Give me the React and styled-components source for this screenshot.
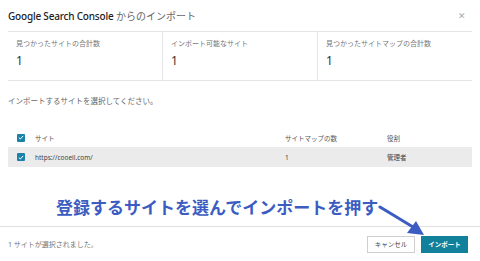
import React from 'react';
import styled, {createGlobalStyle} from "styled-components";

const GlobalStyle = createGlobalStyle`
  html, body {
    margin: 0;
    padding: 0;
    background: #ffffff;
  }
  body {
    font-family: "Noto Sans", "Noto Sans CJK JP", sans-serif;
    color: #333333;
  }
`

const Dialog = styled.div`
  width: 480px;
  height: 261px;
  display: flex;
  flex-direction: column;
  position: relative;
  overflow: hidden;
`
const Content = styled.div`
  padding: 0 8px;
  flex: 1;
  display: flex;
  flex-direction: column;
`
const Header = styled.div`
  height: 32px;
  display: flex;
  align-items: center;
  justify-content: space-between;
  border-bottom: 1px solid #e6e6e6;
  box-sizing: border-box;
`
const Title = styled.h1`
  margin: 0;
  font-size: 10px;
  font-weight: 400;
  color: #666666;
`
const Latin = styled.span`
  font-size: 10px;
  font-weight: 500;
  letter-spacing: -0.2px;
  color: #222222;
`
const Close = styled.span`
  font-size: 9px;
  color: #aaaaaa;
  margin-right: 6px;
`
const Stats = styled.div`
  display: grid;
  grid-template-columns: 154px 155px 1fr;
  height: 48px;
  border-bottom: 1px solid #e6e6e6;
`
const Stat = styled.div`
  padding: 7px 8px 0;
  border-left: ${p => p.first ? 'none' : '1px solid #e6e6e6'};
  display: flex;
  flex-direction: column;
  gap: 4px;
`
const StatLabel = styled.div`
  font-size: 7px;
  color: #777777;
  line-height: 10px;
`
const StatValue = styled.div`
  font-size: 12px;
  color: #333333;
  line-height: 16px;
`
const Hint = styled.p`
  margin: 15px 0 0;
  font-size: 7.5px;
  color: #666666;
  line-height: 10px;
`
const Table = styled.div`
  margin-top: 22px;
  display: flex;
  flex-direction: column;
`
const Row = styled.div`
  display: grid;
  grid-template-columns: 27px 250px 102px 1fr;
  align-items: center;
  height: ${p => p.head ? '19px' : '20px'};
  background: ${p => p.head ? 'transparent' : '#ebebeb'};
  font-size: 6.5px;
  color: ${p => p.head ? '#555555' : '#444444'};
`
const Cell = styled.div`
  white-space: nowrap;
`
const Check = styled.span`
  display: inline-flex;
  align-items: center;
  justify-content: center;
  width: 8px;
  height: 8px;
  margin-left: 9px;
  background: #1a82a8;
  border-radius: 1px;
`
const Annotation = styled.div`
  flex: 1;
  display: flex;
  align-items: flex-end;
  padding: 0 0 8px 48px;
`
const Callout = styled.span`
  font-size: 17px;
  font-weight: 700;
  color: #3c5cc2;
  line-height: 20px;
`
const Arrow = styled.svg`
  position: absolute;
  left: 377px;
  top: 204px;
`
const Footer = styled.div`
  height: 34px;
  border-top: 1px solid #e0e0e0;
  display: flex;
  align-items: center;
  justify-content: space-between;
  padding: 0 12px 0 8px;
`
const Status = styled.span`
  font-size: 7px;
  color: #777777;
`
const Buttons = styled.div`
  display: flex;
  gap: 6px;
`
const Button = styled.button`
  height: 17px;
  width: ${p => p.primary ? '47px' : '48px'};
  padding: 0;
  border: 1px solid ${p => p.primary ? '#11809a' : '#cfcfcf'};
  background: ${p => p.primary ? '#11809a' : '#ffffff'};
  color: ${p => p.primary ? '#ffffff' : '#444444'};
  font-family: inherit;
  font-size: 6.5px;
  font-weight: ${p => p.primary ? 700 : 400};
`

const CheckMark = () => (
    <svg width="6" height="5" viewBox="0 0 6 5">
        <path d="M0.8 2.6 L2.3 4 L5.2 0.9" stroke="#ffffff" strokeWidth="1" fill="none"/>
    </svg>
)

const App = () => {
    return (
        <>
            <GlobalStyle/>
            <Dialog>
                <Content>
                    <Header>
                        <Title><Latin>Google Search Console</Latin> からのインポート</Title>
                        <Close>✕</Close>
                    </Header>
                    <Stats>
                        <Stat first>
                            <StatLabel>見つかったサイトの合計数</StatLabel>
                            <StatValue>1</StatValue>
                        </Stat>
                        <Stat>
                            <StatLabel>インポート可能なサイト</StatLabel>
                            <StatValue>1</StatValue>
                        </Stat>
                        <Stat>
                            <StatLabel>見つかったサイトマップの合計数</StatLabel>
                            <StatValue>1</StatValue>
                        </Stat>
                    </Stats>
                    <Hint>インポートするサイトを選択してください。</Hint>
                    <Table>
                        <Row head>
                            <Cell><Check><CheckMark/></Check></Cell>
                            <Cell>サイト</Cell>
                            <Cell>サイトマップの数</Cell>
                            <Cell>役割</Cell>
                        </Row>
                        <Row>
                            <Cell><Check><CheckMark/></Check></Cell>
                            <Cell>https://cooeil.com/</Cell>
                            <Cell>1</Cell>
                            <Cell>管理者</Cell>
                        </Row>
                    </Table>
                    <Annotation>
                        <Callout>登録するサイトを選んでインポートを押す</Callout>
                    </Annotation>
                </Content>
                <Footer>
                    <Status>1 サイトが選択されました。</Status>
                    <Buttons>
                        <Button>キャンセル</Button>
                        <Button primary>インポート</Button>
                    </Buttons>
                </Footer>
                <Arrow width="52" height="34" viewBox="0 0 52 34">
                    <line x1="3" y1="3" x2="36" y2="23" stroke="#3c5cc2" strokeWidth="3" strokeLinecap="round"/>
                    <polygon points="47,31 30,29 39,17" fill="#3c5cc2"/>
                </Arrow>
            </Dialog>
        </>
    );
};

export default App;
